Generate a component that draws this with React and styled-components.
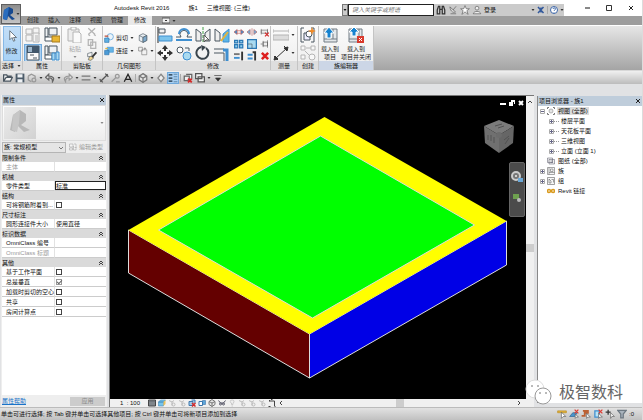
import React, { useState } from "react";
import styled, { createGlobalStyle } from "styled-components";

const GlobalStyle = createGlobalStyle`
  * {
    box-sizing: border-box;
  }
  body {
    margin: 0;
    background: #e1e2e4;
    font-family: "Liberation Sans", "Noto Sans CJK SC", sans-serif;
    font-size: 6px;
    line-height: 8px;
    color: #111;
  }
  button, input, select {
    font: inherit;
    color: inherit;
    margin: 0;
    padding: 0;
    border: 0;
    border-radius: 0;
    background: none;
  }
`;

const gray = "#b4b4b4";
const dark = "#4a5660";
const blue = "#3f8fd0";

// all drawings share a 16x16 box
const ICONS = {
  cursor: <path d="M5 1v12l3-3 2 5 2-1-2-4h4z" fill="#fff" stroke={dark} />,
  family: (
    <g fill="#f4f4f4" stroke={gray}>
      <path d="M1 2h6v5H1zM8 1h6v6H8zM1 8h6v6H1z" />
      <path d="M8 6h6v9H8z" />
      <path d="M10 9h3M10 11h3M10 13h3" />
    </g>
  ),
  types: (
    <g>
      <path d="M1 1h3v9H1zM5 1h8v7H5z" fill="#eef1f3" stroke={dark} />
      <path d="M1 10h8v4H1z" fill="#fff" stroke={dark} />
      <path d="M8 9h8v6H8z" fill="#e9b632" stroke="#a67a1c" />
    </g>
  ),
  props: (
    <g>
      <path d="M2 1h12v14H2z" fill="#fafafa" stroke={dark} />
      <path d="M2 1h12v7H2z" fill="#41566a" />
      <path d="M3 2h4v5H3z" fill="#9db6cb" />
      <path d="M5 10h4M8 13h4" stroke={dark} />
    </g>
  ),
  category: (
    <g>
      <path d="M1 1h3v9H1zM5 1h8v7H5z" fill="#eef1f3" stroke={dark} />
      <path d="M1 10h7v4H1z" fill="#fff" stroke={dark} />
      <path d="M8 8h3v7H8zM12 7h3v8h-3z" fill="#a9d8ef" stroke={blue} />
    </g>
  ),
  paste: (
    <g fill="#ededed" stroke={gray}>
      <path d="M1 2h11v12H1z" />
      <path d="M4 0h5v3H4zM6 5h6l2 2v9H6z" fill="#fafafa" />
    </g>
  ),
  cut: <path d="M2 2l11 10M13 2L2 12M2 12l3 2M11 12l3 2" stroke={gray} strokeWidth="2" fill="none" />,
  copy: <path d="M2 1h7v9H2zM6 5h8v10H6z" fill="#f4f4f4" stroke={gray} strokeWidth="2" />,
  brush: (
    <g>
      <path d="M1 4l7-2v7H1z" fill="#f4f4f4" stroke={dark} />
      <path d="M4 9l4-1 3 3-5 4-4-1z" fill="#f0d490" stroke={dark} />
      <path d="M8 10l7-8" stroke="#333" strokeWidth="3" fill="none" />
    </g>
  ),
  cutGeo: (
    <g>
      <circle cx="10" cy="6" r="5" fill="#e9f4fb" stroke={blue} />
      <path d="M1 8h7v7H1z" fill="#5fb0e2" stroke="#2f73ae" />
      <path d="M1 5h6" stroke="#c14c35" strokeWidth="2" />
    </g>
  ),
  join: (
    <g>
      <path d="M5 2h10v8H5z" fill="#65b5e6" stroke={blue} />
      <path d="M1 7h7v7H1z" fill="#4c9bd6" stroke="#2f73ae" />
      <path d="M2 4h4" stroke="#e6b53d" strokeWidth="2" />
    </g>
  ),
  cube: (
    <g stroke={dark} fill="#e8eef3">
      <path d="M8 1l6 3v8l-6 3-6-3V4z" />
      <path d="M2 4l6 3 6-3M8 7v8" fill="none" />
      <path d="M8 7l6-3v8l-6 3z" fill="#7faacb" />
    </g>
  ),
  cubeGray: (
    <g stroke="#777" fill="#e4e4e4" strokeWidth="2">
      <path d="M8 1l6 4v6l-6 4-6-4V5z" />
      <path d="M2 5l6 3 6-3M8 8v7" fill="none" />
    </g>
  ),
  joinGray: <path d="M1 2h6v6H1zM6 6h8v8H6zM11 2v4M9 4h4" fill="#f2f2f2" stroke="#777" />,
  align: (
    <g>
      <path d="M1 0v16" stroke="#222" strokeWidth="1" />
      <path d="M2 2h6v4H2z" fill="#f2f2f2" stroke={dark} />
      <path d="M2 9h13v5H2z" fill="#7cc4ec" stroke={blue} />
    </g>
  ),
  offset: (
    <g fill="none">
      <path d="M0 13h16" stroke={blue} strokeWidth="2" />
      <path d="M0 10h5a4 4 0 116 0h5" stroke={dark} />
      <path d="M3 7a5 5 0 0110 0" stroke={blue} strokeWidth="2" />
    </g>
  ),
  mirror: (
    <g>
      <path d="M1 2l5 4v8H1z" fill="#eee" stroke={dark} />
      <path d="M8 0v16" stroke="#43a047" strokeDasharray="3 1" />
      <path d="M15 2l-5 4v8h5z" fill="#eee" stroke={dark} />
      <path d="M9 8v7l2-2h3z" fill="#fff" stroke="#555" />
    </g>
  ),
  mirror2: (
    <g>
      <path d="M1 2l5 4v8H1z" fill="#eee" stroke={dark} />
      <path d="M15 2l-6 5v8h6z" fill="#5cb6e6" stroke={blue} />
      <path d="M7 14l7-9" stroke="#e2b33e" strokeWidth="2" />
    </g>
  ),
  move: (
    <g fill="#333">
      <path d="M8 0l3 4H5zM8 16l3-4H5zM0 8l4-3v6zM16 8l-4-3v6z" />
      <path d="M8 3v10M3 8h10" stroke="#333" strokeWidth="2" />
      <path d="M6 6h4v4H6z" fill="#fff" />
    </g>
  ),
  duplicate: (
    <g>
      <circle cx="4" cy="5" r="3" fill="#fff" stroke={dark} />
      <circle cx="11" cy="11" r="4" fill="#a9daf0" stroke={blue} />
      <path d="M9 3h4v3" stroke={dark} fill="none" />
    </g>
  ),
  rotate: (
    <g>
      <path d="M11 3a6 6 0 11-5-1" fill="none" stroke="#39444c" strokeWidth="2" />
      <path d="M6 0l5 2-4 4z" fill="#39444c" />
    </g>
  ),
  trim: (
    <g fill="none">
      <path d="M0 4h10" stroke={dark} />
      <path d="M0 8h10v8" stroke={dark} />
      <path d="M9 5h4v11" stroke={blue} strokeWidth="3" />
    </g>
  ),
  split: <path d="M0 8l5-4v8zM16 8l-5-4v8zM5 6h6M5 10h6" fill="#3f8fd0" stroke="#c9564d" />,
  gap: <path d="M0 8l5-4v8zM16 8l-5-4v8zM8 2v12" fill="#72b4df" stroke="#b55a5a" />,
  pin: (
    <g>
      <path d="M2 5h10v5H2zM2 3v9M12 3v9" fill="#eee" stroke="#666" />
      <path d="M8 9l6 6M14 9l-6 6" stroke="#d42b2b" strokeWidth="2" />
    </g>
  ),
  array: <path d="M1 2h5v4H1zM9 2h5v4H9zM1 9h5v5H1zM9 9h5v5H9z" fill="#8ed0ef" stroke="#2c78b5" strokeWidth="2" />,
  scale: (
    <g>
      <path d="M1 1h14v14H1z" fill="#a9daf0" stroke="#2c78b5" strokeWidth="2" />
      <path d="M1 8h7v7" fill="none" stroke={dark} />
    </g>
  ),
  unpin: <path d="M1 8h3M5 5h7v6H5zM5 3v10M12 2v12" fill="#eee" stroke="#555" />,
  extend: (
    <g strokeWidth="3">
      <path d="M0 5h9" stroke="#777" />
      <path d="M0 11h9" stroke={blue} />
      <path d="M13 1v14" stroke="#333" />
    </g>
  ),
  extend2: (
    <g strokeWidth="3">
      <path d="M9 2h4v13" stroke="#333" fill="none" />
      <path d="M1 6h8M1 12h8" stroke={blue} />
    </g>
  ),
  remove: <path d="M3 3l10 10M13 3L3 13" stroke="#dd1f1f" strokeWidth="4" />,
  ruler: (
    <g stroke={gray}>
      <path d="M0 4h16M0 2v4M16 2v4" />
      <path d="M0 8h16v5H0z" fill="#ddd" />
    </g>
  ),
  dimension: (
    <g stroke="#333">
      <path d="M2 14L14 3M11 1l4 4M1 11l4 4" />
      <path d="M1 15l1-4 3 3zM15 2l-4 1 3 3z" fill="#333" />
    </g>
  ),
  group: (
    <g>
      <path d="M4 1H1v14h3M11 1h3v14h-3" stroke={dark} fill="none" />
      <path d="M4 6h6v7H4z" fill="#eef" stroke={dark} />
      <circle cx="9" cy="7" r="3" fill="#fff" stroke={dark} />
      <path d="M12 0l1 3 3 1-3 1-1 3-1-3-3-1 3-1z" fill="#f38a22" />
    </g>
  ),
  similar: (
    <g fill="#f8f8f8" stroke={gray}>
      <path d="M1 1h4v4H1zM1 10h4v4H1zM11 1h4v4h-4zM6 3h5M5 6l5 5" />
      <circle cx="12" cy="12" r="3" />
    </g>
  ),
  load: (
    <g>
      <path d="M2 2h13v13H2zM2 12h13M11 2v10" fill="#e3e7ea" stroke="#737d85" />
      <path d="M5 11V6H2l5-6 5 6H9v5z" fill="#1783cf" stroke="#fff" />
    </g>
  ),
  loadClose: (
    <g>
      <path d="M1 2h13v13H1zM1 12h13M11 2v10" fill="#e3e7ea" stroke="#737d85" />
      <path d="M4 9V5H1l5-5 5 5H8v4z" fill="#1783cf" stroke="#fff" />
      <path d="M9 9h7v7H9z" fill="#d93a2d" />
      <path d="M11 11l3 3M14 11l-3 3" stroke="#fff" />
    </g>
  ),
  open: <path d="M1 13V3h5l1 2h6v3M1 13l4-6h10l-3 6z" fill="#f5f5f5" stroke={dark} strokeWidth="2" />,
  save: (
    <g>
      <path d="M1 1h14v14H1z" fill="#4b5b69" />
      <path d="M4 2h8v5H4zM4 10h8v5H4z" fill="#eef1f4" />
    </g>
  ),
  sync: (
    <g fill="none" stroke="#999" strokeWidth="2">
      <path d="M2 5l5-3 6 3v3M2 5v6l5 3" />
      <circle cx="11" cy="11" r="3" />
    </g>
  ),
  undo: <path d="M6 2L1 7l5 4V8c4-1 6 1 6 6 4-6 1-9-6-9z" fill="#ddd" stroke="#666" strokeWidth="2" />,
  redo: <path d="M10 2l5 5-5 4V8c-4-1-6 1-6 6-4-6-1-9 6-9z" fill="#e4e4e4" stroke="#999" strokeWidth="2" />,
  measure: <path d="M1 5h14M1 11h14" stroke="#777" strokeWidth="2" />,
  dim: <path d="M2 14L14 2M1 10l5 5M10 1l5 5" stroke="#555" strokeWidth="2" />,
  tag: (
    <g fill="none" stroke="#999" strokeWidth="2">
      <circle cx="10" cy="5" r="3" />
      <path d="M1 14l7-7M8 14h6" />
    </g>
  ),
  text: <path d="M2 14L8 2l6 12M5 10h6" fill="none" stroke="#222" strokeWidth="2" />,
  section: (
    <g fill="#eee" stroke="#888" strokeWidth="2">
      <path d="M8 2l5 6-5 6-5-6z" />
    </g>
  ),
  thin: (
    <g>
      <path d="M1 3h6M1 8h6M1 13h6" stroke="#1c2f3f" strokeWidth="2" />
      <path d="M9 2h6M9 6h6M9 10h6M9 14h6" stroke="#37617f" />
    </g>
  ),
  closeHidden: (
    <g>
      <path d="M2 5h8v7H2zM5 2h9v7" fill="#eee" stroke="#666" strokeWidth="2" />
      <path d="M8 9l6 6M14 9l-6 6" stroke="#d42b2b" strokeWidth="3" />
    </g>
  ),
  windows: <path d="M1 1h10v8H1zM5 6h10v8H5z" fill="#f3f3f3" stroke="#555" strokeWidth="2" />,
  more: <path d="M2 4h12M4 8h8l-4 5z" fill="#333" stroke="#333" />,
  binoculars: (
    <g fill="#ccc" stroke="#333" strokeWidth="2">
      <path d="M2 8l2-6h2v12H2zM14 8l-2-6h-2v12h4zM6 7h4" />
    </g>
  ),
  satellite: <path d="M3 3l9 8c-3 2-8 0-9-8zM8 8l5-6M4 14h9" fill="#ddd" stroke="#555" />,
  star: <path d="M8 1l2 5h5l-4 3 2 6-5-4-5 4 2-6-4-3h5z" fill="#fff" stroke="#555" />,
  person: (
    <g fill="#eee" stroke="#555">
      <circle cx="8" cy="5" r="3" />
      <path d="M2 14c1-5 11-5 12 0z" />
    </g>
  ),
  exchange: <path d="M2 2l11 12M13 2L2 14M8 3v10" stroke="#31589b" strokeWidth="3" />,
  help: (
    <g fill="#fff" stroke="#3e67a8" strokeWidth="2">
      <circle cx="8" cy="8" r="7" />
      <path d="M6 6c0-3 5-3 5 0 0 2-3 2-3 4M8 12v1" fill="none" />
    </g>
  ),
  editType: <path d="M1 2h7v6H1zM1 10h6v4H1zM10 2h4v12H9V6M11 9h4" fill="#f4f4f4" stroke="#999" />,
  views: (
    <g fill="none" stroke="#777">
      <path d="M1 4V1h3M12 1h3v3M1 12v3h3M12 15h3v-3" strokeWidth="2" />
      <circle cx="8" cy="8" r="4" fill="#e5e5e5" />
    </g>
  ),
  sheets: <path d="M1 2h10v9H1zM4 5h11v9H4zM7 8h5M7 11h5" fill="#f0f0f0" stroke="#556" />,
  families: <path d="M1 1h14v14H1zM4 1v14M4 11h11M7 4h5v5H7z" fill="#f7f7f7" stroke="#555" />,
  groups: <path d="M1 1h14v14H1zM4 4l4 4v4H4zM9 5h4v6" fill="#f7f7f7" stroke="#444" />,
  link: (
    <g fill="none" stroke="#d99a1d" strokeWidth="3">
      <circle cx="4" cy="8" r="3" />
      <circle cx="12" cy="8" r="3" />
    </g>
  ),
  detail: (
    <g>
      <path d="M1 2h14v12H1z" fill="#8b9095" stroke="#444" strokeWidth="2" />
      <path d="M1 5h14M4 2v12M8 2v12M12 2v12" stroke="#5f656b" />
    </g>
  ),
  style: (
    <g>
      <path d="M1 6l4-4h10l-4 4zM1 6h10v8H1z" fill="#77c4ea" stroke="#317bad" />
      <path d="M11 6l4-4v8l-4 4z" fill="#e9c25a" />
    </g>
  ),
  faint: (
    <g fill="none" stroke="#bbb" strokeWidth="2">
      <path d="M2 3l6 3v7M8 6l4-3" />
      <circle cx="11" cy="11" r="3" />
    </g>
  ),
  cropOff: (
    <g>
      <path d="M2 5h8v8H2zM7 2h7v6" stroke="#3c77ad" strokeWidth="2" fill="#9fcbe8" />
      <path d="M8 8l7 7M15 8l-7 7" stroke="#d42b2b" strokeWidth="3" />
    </g>
  ),
  crop: (
    <g>
      <path d="M2 5h7v8H2z" fill="#fff" stroke="#3c77ad" strokeWidth="2" />
      <path d="M9 3h6v8H9z" fill="#5da7db" stroke="#2c639b" />
    </g>
  ),
  glasses: (
    <g fill="none" stroke="#556" strokeWidth="2">
      <path d="M1 3l4 5M15 3l-4 5M5 8h6" />
      <circle cx="5" cy="10" r="2" />
      <circle cx="11" cy="10" r="2" />
    </g>
  ),
  bulb: <path d="M8 2a3 3 0 012 6v3H7V8a3 3 0 011-6zM7 14h3" fill="#eee" stroke="#aaa" />,
  reveal: <path d="M3 4h10v11M3 2v3M1 15h4M6 1h3M12 12l3 3" fill="none" stroke="#444" strokeWidth="2" />,
  selLink: (
    <g>
      <path d="M1 3h14v3H1z" fill="#e3b43a" stroke="#b7861a" />
      <path d="M7 5v10l3-3h4z" fill="#fff" stroke="#555" />
    </g>
  ),
  selUnder: (
    <g>
      <path d="M1 12l5-6h7l-4 6z" fill="#4695cf" stroke="#285f8e" />
      <path d="M9 1l6 6M15 1L9 7" stroke="#dd3d33" strokeWidth="2" />
      <path d="M10 8v7l2-2h3z" fill="#fff" stroke="#555" />
    </g>
  ),
  selPin: (
    <g>
      <path d="M3 3h8v3H6v5H1" fill="none" stroke="#bb6134" strokeWidth="3" />
      <path d="M9 7v8l2-2h4z" fill="#fff" stroke="#555" />
    </g>
  ),
  selFace: (
    <g>
      <path d="M3 3h7v10H3z" fill="#b9e2f5" stroke={blue} strokeWidth="2" />
      <path d="M9 1l6 6M15 1L9 7" stroke="#dd3d33" strokeWidth="2" />
      <path d="M9 7v8l2-2h4z" fill="#fff" stroke="#555" />
    </g>
  ),
  drag: (
    <g>
      <path d="M5 1v8M1 5h8" stroke="#333" strokeWidth="2" />
      <path d="M9 6v9l2-3h4z" fill="#fff" stroke="#555" />
    </g>
  ),
  filter: <path d="M1 2h14L10 8v6H6V8z" fill="#a9b3bd" stroke="#6d7882" strokeWidth="2" />,
};

const Svg = styled.svg`
  display: block;
  flex: none;
  width: ${(p) => p.$size}px;
  height: ${(p) => p.$size}px;
`;

function Icon({ name, size = 10 }) {
  return (
    <Svg $size={size} viewBox="0 0 16 16" fill="none" aria-hidden="true">
      {ICONS[name]}
    </Svg>
  );
}

function Caret({ color = "#333" }) {
  return (
    <Svg $size={4} viewBox="0 0 8 8" aria-hidden="true">
      <path d="M1 2h6L4 6z" fill={color} />
    </Svg>
  );
}

const Window = styled.div`
  display: flex;
  flex-direction: column;
  min-height: 100vh;
  border-right: 1px solid #dcdcdc;
`;

const Header = styled.header`
  position: relative;
`;

const AppButton = styled.button`
  position: absolute;
  top: 4px;
  left: 1px;
  width: 20px;
  height: 20px;
  display: flex;
  align-items: center;
  background: linear-gradient(#8c8c8c, #c4c4c4);
  border: 1px solid #5e5e5e;
`;

const TitleBar = styled.div`
  display: flex;
  align-items: flex-end;
  height: 16px;
  padding-left: 114px;
  background: #fff;
`;

const Title = styled.h1`
  display: flex;
  gap: 9px;
  margin: 0;
  padding-bottom: 4px;
  flex: 1;
  font-size: 6px;
  font-weight: 400;
  white-space: nowrap;
`;

const DocName = styled.span`
  margin-left: 10px;
`;

const InfoCenter = styled.div`
  display: flex;
  align-items: center;
  gap: 2px;
  width: 222px;
  height: 12px;
  background: #cbcbcb;
`;

const SearchToggle = styled.button`
  display: grid;
  place-items: center;
  width: 6px;
  height: 12px;
  border: 1px solid #777;
`;

const SearchInput = styled.input`
  width: 86px;
  height: 12px;
  margin-left: -2px;
  padding: 0 3px;
  border: 1px solid #222;
  background: #fff;
  font-style: italic;
  &::placeholder {
    color: #777;
  }
`;

const IconButton = styled.button`
  display: flex;
  align-items: center;
  flex: none;
`;

const SignIn = styled.button`
  display: flex;
  align-items: center;
  flex: 1;
  justify-content: space-between;
`;

const Divider = styled.span`
  width: 1px;
  height: 8px;
  background: #aaa;
`;

const WindowControls = styled.div`
  display: flex;
  height: 16px;
  margin-left: 12px;
`;

const WindowButton = styled.button`
  display: grid;
  place-items: center;
  width: 22px;
`;

const TabBar = styled.nav`
  display: flex;
  gap: 1px;
  height: 9px;
  padding-left: 23px;
  background: #9d9d9d;
`;

const Tab = styled.button`
  padding: 0 ${(p) => (p.$active ? 6 : 4)}px;
  line-height: 9px;
  color: ${(p) => (p.$active ? "#111" : "#222")};
  background: ${(p) => (p.$active ? "#e9e9e9" : "none")};
`;

const TabMode = styled.button`
  display: flex;
  align-items: center;
  gap: 2px;
  margin-left: 9px;
`;

const Ribbon = styled.div`
  display: flex;
  height: 46px;
  padding-left: 1px;
  border-top: 1px solid #fff;
  border-bottom: 1px solid #d8d8d8;
  background: linear-gradient(#e6e6e6, #a4a4a4);
`;

const Panel = styled.section`
  display: flex;
  flex-direction: column;
  flex: 0 0 ${(p) => p.$width}px;
  border-right: 1px solid #c4c4c4;
  background: linear-gradient(#fbfbfb, #ececec);
`;

const PanelBody = styled.div`
  display: flex;
  justify-content: center;
  gap: ${(p) => p.$gap || 2}px;
  flex: 1;
  padding-top: ${(p) => (p.$flush ? 0 : 1)}px;
`;

const PanelTitle = styled.h2`
  display: flex;
  align-items: center;
  justify-content: center;
  gap: 3px;
  height: 9px;
  margin: 0;
  font-size: 6px;
  font-weight: 400;
  white-space: nowrap;
  background: ${(p) => (p.$accent ? "#ccd6e6" : "#dedede")};
`;

const BigButton = styled.button`
  display: flex;
  flex-direction: column;
  align-items: center;
  gap: ${(p) => (p.$active ? 5 : 2)}px;
  padding: ${(p) => (p.$active ? "3px 2px 0" : "0")};
  width: ${(p) => (p.$active ? "18px" : "auto")};
  white-space: nowrap;
  color: ${(p) => (p.disabled ? "#aaa" : "#222")};
  background: ${(p) => (p.$active ? "linear-gradient(#c3def6, #a9d2f6)" : "none")};
  border: ${(p) => (p.$active ? "1px solid #86b8e6" : "0")};
`;

const IconGrid = styled.div`
  display: grid;
  grid-template-columns: repeat(${(p) => p.$cols}, auto);
  gap: 2px ${(p) => p.$gap || 3}px;
  align-content: start;
`;

const Tool = styled.button`
  display: flex;
  align-items: center;
  gap: 2px;
  background: ${(p) => (p.$active ? "#a9d0f3" : "none")};
  outline: ${(p) => (p.$active ? "1px solid #6fa9dc" : "none")};
`;

const GeometryTools = styled.div`
  display: grid;
  grid-template-columns: auto auto;
  gap: 3px 4px;
  align-content: center;
`;

const QuickAccess = styled.div`
  display: flex;
  align-items: center;
  gap: 2px;
  height: 13px;
  padding-left: 3px;
  background: linear-gradient(#f0f0f0, #bcbcbc);
`;

const Workspace = styled.main`
  display: flex;
  flex: 1;
  padding: 11px 0 0 1px;
`;

const Palette = styled.aside`
  display: flex;
  flex-direction: column;
  flex: 0 0 106px;
  margin-right: 2px;
  padding: 0 1px;
  background: #eee;
`;

const PaletteHeader = styled.div`
  display: flex;
  align-items: center;
  justify-content: space-between;
  height: 10px;
  padding: 0 1px;
  background: #bfcddb;
`;

const TypePreview = styled.button`
  display: flex;
  align-items: center;
  justify-content: space-between;
  height: 36px;
  padding: 1px;
  border: 1px solid #ddd;
  background: linear-gradient(#fff, #ededed);
`;

const Thumbnail = styled.svg`
  width: 32px;
  height: 32px;
  background: linear-gradient(135deg, #ececec, #d2d2d2);
`;

const FamilyRow = styled.div`
  display: flex;
  align-items: center;
  gap: 3px;
  height: 12px;
`;

const FamilySelect = styled.span`
  position: relative;
  flex: 0 0 64px;
  select {
    appearance: none;
    width: 100%;
    height: 11px;
    padding-left: 1px;
    border: 1px solid #b5b5b5;
    background: #e5e5e5;
  }
  svg {
    position: absolute;
    right: 2px;
    top: 4px;
    pointer-events: none;
  }
`;

const EditType = styled.button`
  display: flex;
  align-items: center;
  gap: 2px;
  color: #999;
  white-space: nowrap;
`;

const TableArea = styled.div`
  flex: 1;
  background: #fff;
`;

const PropertyTable = styled.table`
  width: 100%;
  table-layout: fixed;
  border-spacing: 0;
  th, td {
    padding: 0;
    font-weight: 400;
    text-align: left;
    white-space: nowrap;
  }
`;

const GroupRow = styled.tr`
  height: 9px;
  background: #dadada;
  button {
    display: flex;
    align-items: center;
    justify-content: space-between;
    width: 100%;
    height: 9px;
    padding: 0 2px 0 0;
  }
`;

const PropertyRow = styled.tr`
  height: 10px;
  color: ${(p) => (p.$muted ? "#999" : "#111")};
  th, td {
    height: 10px;
    border-bottom: 1px solid #ccc;
  }
  th {
    padding-left: 4px;
  }
  td {
    border-left: 1px solid #e2e2e2;
  }
`;

const ValueInput = styled.input`
  display: block;
  width: 100%;
  height: 9px;
  outline: ${(p) => (p.$boxed ? "1px solid #222" : "none")};
  outline-offset: -1px;
  padding-left: 1px;
`;

const Checkbox = styled.input`
  appearance: none;
  display: block;
  width: 6px;
  height: 6px;
  margin-left: 1px;
  border: 1px solid ${(p) => (p.$muted ? "#999" : "#444")};
  background: #fff;
  &:checked::after {
    content: "";
    display: block;
    width: 4px;
    height: 2px;
    border: solid #666;
    border-width: 0 0 1px 1px;
    transform: rotate(-45deg);
  }
`;

const PaletteFooter = styled.div`
  display: flex;
  align-items: center;
  justify-content: space-between;
  height: 12px;
  a {
    color: #1a73c8;
  }
`;

const ApplyButton = styled.button`
  width: 35px;
  height: 9px;
  margin-right: 1px;
  color: #888;
  background: #ccc;
`;

const ViewArea = styled.section`
  display: flex;
  flex: 1;
  flex-direction: column;
  min-width: 0;
  border-top: 1px solid #777;
  border-left: 1px solid #777;
`;

const ViewRow = styled.div`
  display: flex;
  flex: 1;
`;

const Canvas = styled.div`
  position: relative;
  flex: 1;
  min-width: 0;
  background: #000;
`;

const Scene = styled.svg`
  position: absolute;
  inset: 0;
  width: 100%;
  height: 100%;
`;

const ViewButtons = styled.div`
  position: absolute;
  top: 3px;
  right: 1px;
  display: flex;
  gap: 1px;
`;

const ViewCube = styled.svg`
  position: absolute;
  top: 24px;
  right: 11px;
  width: 32px;
  height: 34px;
`;

const NavBar = styled.div`
  position: absolute;
  top: 66px;
  right: 1px;
  display: flex;
  flex-direction: column;
  align-items: center;
  justify-content: space-between;
  width: 16px;
  height: 55px;
  padding: 8px 0 14px;
  border: 1px solid #666;
  border-radius: 2px;
  background: #4b4b4b;
`;

const VScroll = styled.div`
  display: flex;
  flex-direction: column;
  align-items: center;
  justify-content: space-between;
  width: 8px;
  padding: 3px 0;
  background: #f0f0f0;
`;

const Thumb = styled.span`
  flex: none;
  width: 8px;
  height: 8px;
  background: #cdcdcd;
`;

const ViewBar = styled.div`
  display: flex;
  align-items: center;
  gap: 2px;
  height: 8px;
  padding: 0 12px 0 10px;
  background: #f0f0f0;
`;

const Scale = styled.button`
  width: 26px;
  text-align: left;
  white-space: pre;
`;

const HScroll = styled.div`
  display: flex;
  align-items: center;
  justify-content: space-between;
  flex: 1;
`;

const Browser = styled.aside`
  flex: 0 0 105px;
  margin: 1px 0 4px 3px;
  border-left: 1px solid #888;
  background: #fff;
`;

const Tree = styled.ul`
  list-style: none;
  margin: 0;
  padding: 0 0 0 2px;
  ul {
    padding-left: 9px;
  }
`;

const TreeItem = styled.div`
  display: flex;
  align-items: center;
  gap: 2px;
  height: 10px;
  padding-left: ${(p) => (p.$leaf ? 7 : 0)}px;
`;

const TreeLabel = styled.span`
  padding: 0 1px;
  background: ${(p) => (p.$selected ? "#ddd" : "none")};
`;

const Branch = styled.span`
  width: 5px;
  margin-left: -2px;
  border-top: 1px dotted #999;
`;

const StatusBar = styled.footer`
  display: flex;
  align-items: center;
  justify-content: space-between;
  height: 13px;
  padding: 0 8px 0 1px;
  border-top: 1px solid #bbb;
  background: linear-gradient(#e2e2e2, #c0c0c0);
  white-space: nowrap;
`;

const StatusTools = styled.div`
  display: flex;
  align-items: center;
  gap: 2px;
`;

const Watermark = styled.div`
  position: absolute;
  right: 20px;
  bottom: 13px;
  display: flex;
  align-items: center;
  gap: 6px;
  font-size: 16px;
  line-height: 28px;
  color: #666;
  text-shadow: 1px 1px 0 #fff;
  pointer-events: none;
  svg {
    width: 28px;
    height: 28px;
  }
`;

const TABS = ["创建", "插入", "注释", "视图", "管理", "修改"];

const PROPERTIES = [
  { group: "限制条件", rows: [{ label: "主体", type: "text", muted: true }] },
  { group: "机械", rows: [{ label: "零件类型", type: "text", value: "标准", boxed: true }] },
  { group: "结构", rows: [{ label: "可将钢筋附着到...", type: "check" }] },
  { group: "尺寸标注", rows: [{ label: "圆形连接件大小", type: "text", value: "使用直径" }] },
  {
    group: "标识数据",
    rows: [
      { label: "OmniClass 编号", type: "text" },
      { label: "OmniClass 标题", type: "text", muted: true },
    ],
  },
  {
    group: "其他",
    rows: [
      { label: "基于工作平面", type: "check" },
      { label: "总是垂直", type: "check", value: true },
      { label: "加载时剪切的空心", type: "check" },
      { label: "共享", type: "check" },
      { label: "房间计算点", type: "check" },
    ],
  },
];

const QUICK_TOOLS = [
  "open", "save", "sync", "caret", "undo", "caret", "redo", "caret", "measure", "caret",
  "dim", "tag", "text", "divider", "cubeGray", "caret", "section", "thin", "divider",
  "closeHidden", "windows", "caret", "more",
];

const VIEW_TOOLS = [
  "detail", "style", "faint", "faint", "cropOff", "crop", "cubeGray", "glasses",
  "bulb", "faint", "faint", "faint", "reveal",
];

function Cross({ color = "#222" }) {
  return (
    <Svg $size={6} viewBox="0 0 6 6" aria-hidden="true">
      <path d="M1 1l4 4M5 1L1 5" stroke={color} />
    </Svg>
  );
}

function Chevron({ d, color = "#444" }) {
  return (
    <Svg $size={6} viewBox="0 0 6 6" fill="none" aria-hidden="true">
      <path d={d} stroke={color} />
    </Svg>
  );
}

function TopBar() {
  return (
    <TitleBar>
      <Title>
        <span>Autodesk Revit 2016</span>
        <DocName>族1</DocName>
        <span>三维视图: {"{三维}"}</span>
      </Title>
      <InfoCenter>
        <SearchToggle aria-label="搜索选项">
          <Caret color="#111" />
        </SearchToggle>
        <SearchInput placeholder="键入关键字或短语" aria-label="搜索" />
        {["binoculars", "satellite", "star", "person"].map((name) => (
          <IconButton key={name} aria-label={name}>
            <Icon name={name} />
          </IconButton>
        ))}
        <SignIn>
          登录
          <Caret />
        </SignIn>
        <IconButton aria-label="Exchange"><Icon name="exchange" size={8} /></IconButton>
        <Divider />
        <IconButton aria-label="帮助"><Icon name="help" size={8} /></IconButton>
        <Caret />
      </InfoCenter>
      <WindowControls>
        <WindowButton aria-label="最小化">
          <Chevron d="M1 3h5" color="#111" />
        </WindowButton>
        <WindowButton aria-label="最大化">
          <Svg $size={6} viewBox="0 0 6 6" fill="none"><path d="M.5.5h5v5h-5z" stroke="#333" /></Svg>
        </WindowButton>
        <WindowButton aria-label="关闭"><Cross /></WindowButton>
      </WindowControls>
    </TitleBar>
  );
}

function RibbonPanel({ title, width, accent, caret, gap, flush, children }) {
  return (
    <Panel $width={width}>
      <PanelBody $gap={gap} $flush={flush}>{children}</PanelBody>
      <PanelTitle $accent={accent}>
        {title}
        {caret && <Caret />}
      </PanelTitle>
    </Panel>
  );
}

function tools(names, size) {
  return names.map((name) => (
    <Tool key={name} aria-label={name} $active={name === "props"}>
      <Icon name={name} size={size} />
    </Tool>
  ));
}

function RibbonBar() {
  return (
    <Ribbon>
      <RibbonPanel title="选择" width={22} caret flush>
        <BigButton $active>
          <Icon name="cursor" size={12} />
          修改
        </BigButton>
      </RibbonPanel>
      <RibbonPanel title="属性" width={39}>
        <IconGrid $cols={2}>{tools(["family", "types", "props", "category"], 16)}</IconGrid>
      </RibbonPanel>
      <RibbonPanel title="剪贴板" width={41} gap={4}>
        <BigButton disabled>
          <Icon name="paste" size={16} />
          粘贴
          <Caret color="#888" />
        </BigButton>
        <IconGrid $cols={1}>{tools(["cut", "copy", "brush"], 10)}</IconGrid>
      </RibbonPanel>
      <RibbonPanel title="几何图形" width={53}>
        <GeometryTools>
          <Tool><Icon name="cutGeo" />剪切<Caret /></Tool>
          <Tool aria-label="拆分面"><Icon name="cube" /></Tool>
          <Tool><Icon name="join" />连接<Caret /></Tool>
          <Tool aria-label="取消连接"><Icon name="joinGray" /><Caret /></Tool>
        </GeometryTools>
      </RibbonPanel>
      <RibbonPanel title="修改" width={115} gap={4}>
        <IconGrid $cols={4}>
          {tools(["align", "offset", "mirror", "mirror2", "move", "duplicate", "rotate", "trim"], 16)}
        </IconGrid>
        <IconGrid $cols={3}>
          {tools(["split", "gap", "pin", "array", "scale", "unpin", "extend", "extend2", "remove"], 10)}
        </IconGrid>
      </RibbonPanel>
      <RibbonPanel title="测量" width={27}>
        <IconGrid $cols={1}>
          <Tool aria-label="测量"><Icon name="ruler" size={16} /><Caret /></Tool>
          <Tool aria-label="尺寸标注"><Icon name="dimension" size={16} /><Caret /></Tool>
        </IconGrid>
      </RibbonPanel>
      <RibbonPanel title="创建" width={21}>
        <IconGrid $cols={1}>{tools(["group", "similar"], 16)}</IconGrid>
      </RibbonPanel>
      <RibbonPanel title="族编辑器" width={55} accent>
        <BigButton>
          <Icon name="load" size={16} />
          <span>载入到<br />项目</span>
        </BigButton>
        <BigButton>
          <Icon name="loadClose" size={16} />
          <span>载入到<br />项目并关闭</span>
        </BigButton>
      </RibbonPanel>
    </Ribbon>
  );
}

function QuickBar() {
  return (
    <QuickAccess>
      {QUICK_TOOLS.map((name, index) => {
        if (name === "caret") return <Caret key={index} />;
        if (name === "divider") return <Divider key={index} />;
        return (
          <Tool key={index} aria-label={name} $active={name === "thin"}>
            <Icon name={name} />
          </Tool>
        );
      })}
    </QuickAccess>
  );
}

function PropertyValue({ row, id }) {
  if (row.type === "check") {
    return <Checkbox id={id} type="checkbox" defaultChecked={row.value} $muted={row.value} />;
  }
  return <ValueInput id={id} defaultValue={row.value} $boxed={row.boxed} disabled={row.muted} />;
}

function Properties() {
  return (
    <Palette>
      <PaletteHeader>
        属性
        <IconButton aria-label="关闭属性"><Cross /></IconButton>
      </PaletteHeader>
      <TypePreview aria-label="类型选择器">
        <Thumbnail viewBox="0 0 32 32">
          <path d="M9 8l7-5 6 4v7l-5 4 9 5-6 2-7-7-2 7-5-2z" fill="#b8b8b8" />
          <path d="M9 8l7-5-1 13-2 9-5-2z" fill="#c6c6c6" />
        </Thumbnail>
        <Caret color="#888" />
      </TypePreview>
      <FamilyRow>
        <FamilySelect>
          <select aria-label="族">
            <option>族: 常规模型</option>
          </select>
          <Chevron d="M1 1l2 2 2-2" color="#777" />
        </FamilySelect>
        <EditType>
          <Icon name="editType" size={8} />
          编辑类型
        </EditType>
      </FamilyRow>
      <TableArea>
        <PropertyTable>
          <colgroup>
            <col width="50%" />
            <col width="50%" />
          </colgroup>
          {PROPERTIES.map((section) => (
            <tbody key={section.group}>
              <GroupRow>
                <th colSpan={2}>
                  <button>
                    {section.group}
                    <Chevron d="M1 3l2-2 2 2M1 5l2-2 2 2" />
                  </button>
                </th>
              </GroupRow>
              {section.rows.map((row) => (
                <PropertyRow key={row.label} $muted={row.muted}>
                  <th>
                    <label htmlFor={row.label}>{row.label}</label>
                  </th>
                  <td>
                    <PropertyValue row={row} id={row.label} />
                  </td>
                </PropertyRow>
              ))}
            </tbody>
          ))}
        </PropertyTable>
      </TableArea>
      <PaletteFooter>
        <a href="#help">属性帮助</a>
        <ApplyButton disabled>应用</ApplyButton>
      </PaletteFooter>
    </Palette>
  );
}

function ModelView() {
  return (
    <ViewArea>
      <ViewRow>
        <Canvas>
          <Scene viewBox="0 0 415 303" stroke="#ddd" strokeWidth="1">
            <path d="M18 134l181 104v44L18 177z" fill="#640000" />
            <path d="M199 238l197-113v44L199 282z" fill="#0000e6" />
            <path d="M214 21l182 104-197 113L18 134z" fill="#ff0" stroke="none" />
            <path d="M210 40l154 89-162 93L48 134z" fill="#0f0" />
          </Scene>
          <ViewButtons>
            <IconButton aria-label="最小化视图"><Svg $size={8} viewBox="0 0 8 8"><path d="M1 4h6v2H1z" fill="#fff" /></Svg></IconButton>
            <IconButton aria-label="还原视图"><Svg $size={8} viewBox="0 0 8 8"><path d="M3 1h4v4H6V3H3zM1 3h4v4H1z" fill="#fff" /></Svg></IconButton>
            <IconButton aria-label="关闭视图"><Svg $size={8} viewBox="0 0 8 8"><path d="M2 2l4 4M6 2L2 6" stroke="#fff" strokeWidth="2" /></Svg></IconButton>
          </ViewButtons>
          <ViewCube viewBox="0 0 32 34">
            <path d="M16 0l15 6-15 9L1 6z" fill="#7b7b7b" />
            <path d="M1 6l15 9v18L2 23z" fill="#707070" />
            <path d="M31 6l-15 9v18l14-10z" fill="#666" />
            <circle cx="16" cy="15" r="3" fill="#6c6c6c" />
            <path d="M12 6l7-2M15 8l6-2M5 15v5M8 15v6M11 17v6M21 20l5-4M22 24l4-6" stroke="#525252" />
          </ViewCube>
          <NavBar>
            <IconButton aria-label="导航控制盘">
              <Svg $size={12} viewBox="0 0 12 12">
                <circle cx="5" cy="5" r="4" fill="#777" stroke="#ccc" strokeWidth="2" />
                <circle cx="5" cy="5" r="1" fill="#eee" />
                <path d="M7 7h5v4H7z" fill="#6aa7d6" />
              </Svg>
            </IconButton>
            <IconButton aria-label="缩放">
              <Svg $size={8} viewBox="0 0 8 8">
                <path d="M0 0h6v5H0z" fill="#6ea04f" />
                <circle cx="6" cy="6" r="2" fill="#bbb" />
              </Svg>
            </IconButton>
          </NavBar>
        </Canvas>
        <VScroll>
          <Chevron d="M1 4l2-2 2 2" />
          <Thumb />
          <Chevron d="M1 2l2 2 2-2" />
        </VScroll>
      </ViewRow>
      <ViewBar>
        <Scale>1  : 100</Scale>
        {VIEW_TOOLS.map((name, index) => (
          <IconButton key={index} aria-label={name}>
            <Icon name={name} size={8} />
          </IconButton>
        ))}
        <HScroll>
          <Chevron d="M4 1L2 3l2 2" />
          <Thumb />
          <Chevron d="M2 1l2 2-2 2" />
        </HScroll>
      </ViewBar>
    </ViewArea>
  );
}

function Expander({ open }) {
  return (
    <Svg $size={5} viewBox="0 0 5 5" fill="#fff" aria-hidden="true">
      <path d="M.5.5h4v4h-4z" stroke="#aaa" />
      <path d={open ? "M1 2.5h3" : "M1 2.5h3M2.5 1v3"} stroke="#668" />
    </Svg>
  );
}

function ProjectBrowser() {
  return (
    <Browser>
      <PaletteHeader>
        项目浏览器 - 族1
        <IconButton aria-label="关闭项目浏览器"><Cross /></IconButton>
      </PaletteHeader>
      <Tree>
        <li>
          <TreeItem>
            <Expander open />
            <Icon name="views" size={8} />
            <TreeLabel $selected>视图 (全部)</TreeLabel>
          </TreeItem>
          <Tree as="ul">
            {["楼层平面", "天花板平面", "三维视图", "立面 (立面 1)"].map((name) => (
              <li key={name}>
                <TreeItem>
                  <Expander />
                  <Branch />
                  {name}
                </TreeItem>
              </li>
            ))}
          </Tree>
        </li>
        <li><TreeItem $leaf><Icon name="sheets" size={8} /><TreeLabel>图纸 (全部)</TreeLabel></TreeItem></li>
        <li><TreeItem><Expander /><Icon name="families" size={8} /><TreeLabel>族</TreeLabel></TreeItem></li>
        <li><TreeItem><Expander /><Icon name="groups" size={8} /><TreeLabel>组</TreeLabel></TreeItem></li>
        <li><TreeItem $leaf><Icon name="link" size={8} /><TreeLabel>Revit 链接</TreeLabel></TreeItem></li>
      </Tree>
    </Browser>
  );
}

function App() {
  const [activeTab, setActiveTab] = useState("修改");

  return (
    <>
      <GlobalStyle />
      <Window>
        <Header>
          <TopBar />
          <TabBar>
            {TABS.map((name) => (
              <Tab key={name} $active={name === activeTab} onClick={() => setActiveTab(name)}>
                {name}
              </Tab>
            ))}
            <TabMode aria-label="功能区显示">
              <Svg $size={8} viewBox="0 0 8 8"><path d="M0 1h8v5H0z" fill="#eee" stroke="#555" /><path d="M3 3h2v1H3z" fill="#333" /></Svg>
              <Caret />
            </TabMode>
          </TabBar>
          <AppButton aria-label="应用程序菜单">
            <Svg $size={14} viewBox="0 0 14 14">
              <path d="M2 3l5-3 4 2v4L8 8l5 4-3 1-4-4-1 4-4-1z" fill="#17498f" />
              <path d="M2 3l5-3-2 13-4-1z" fill="#2a6dbe" />
            </Svg>
            <Caret />
          </AppButton>
        </Header>
        <RibbonBar />
        <QuickBar />
        <Workspace>
          <Properties />
          <ModelView />
          <ProjectBrowser />
        </Workspace>
        <StatusBar>
          <span>单击可进行选择; 按 Tab 键并单击可选择其他项目; 按 Ctrl 键并单击可将新项目添加到选择</span>
          <StatusTools>
            {["selLink", "selUnder", "selPin", "selFace", "drag", "filter"].map((name) => (
              <IconButton key={name} aria-label={name}>
                <Icon name={name} />
              </IconButton>
            ))}
            :0
          </StatusTools>
        </StatusBar>
      </Window>
      <Watermark>
        <svg viewBox="0 0 28 28">
          <circle cx="10" cy="10" r="9" fill="#fff" stroke="#ddd" />
          <circle cx="18" cy="17" r="8" fill="#fff" stroke="#999" />
          <path d="M6 7h2M12 7h2M14 14h2M20 14h2" stroke="#777" strokeWidth="1" />
        </svg>
        极智数科
      </Watermark>
    </>
  );
}

export default App;
